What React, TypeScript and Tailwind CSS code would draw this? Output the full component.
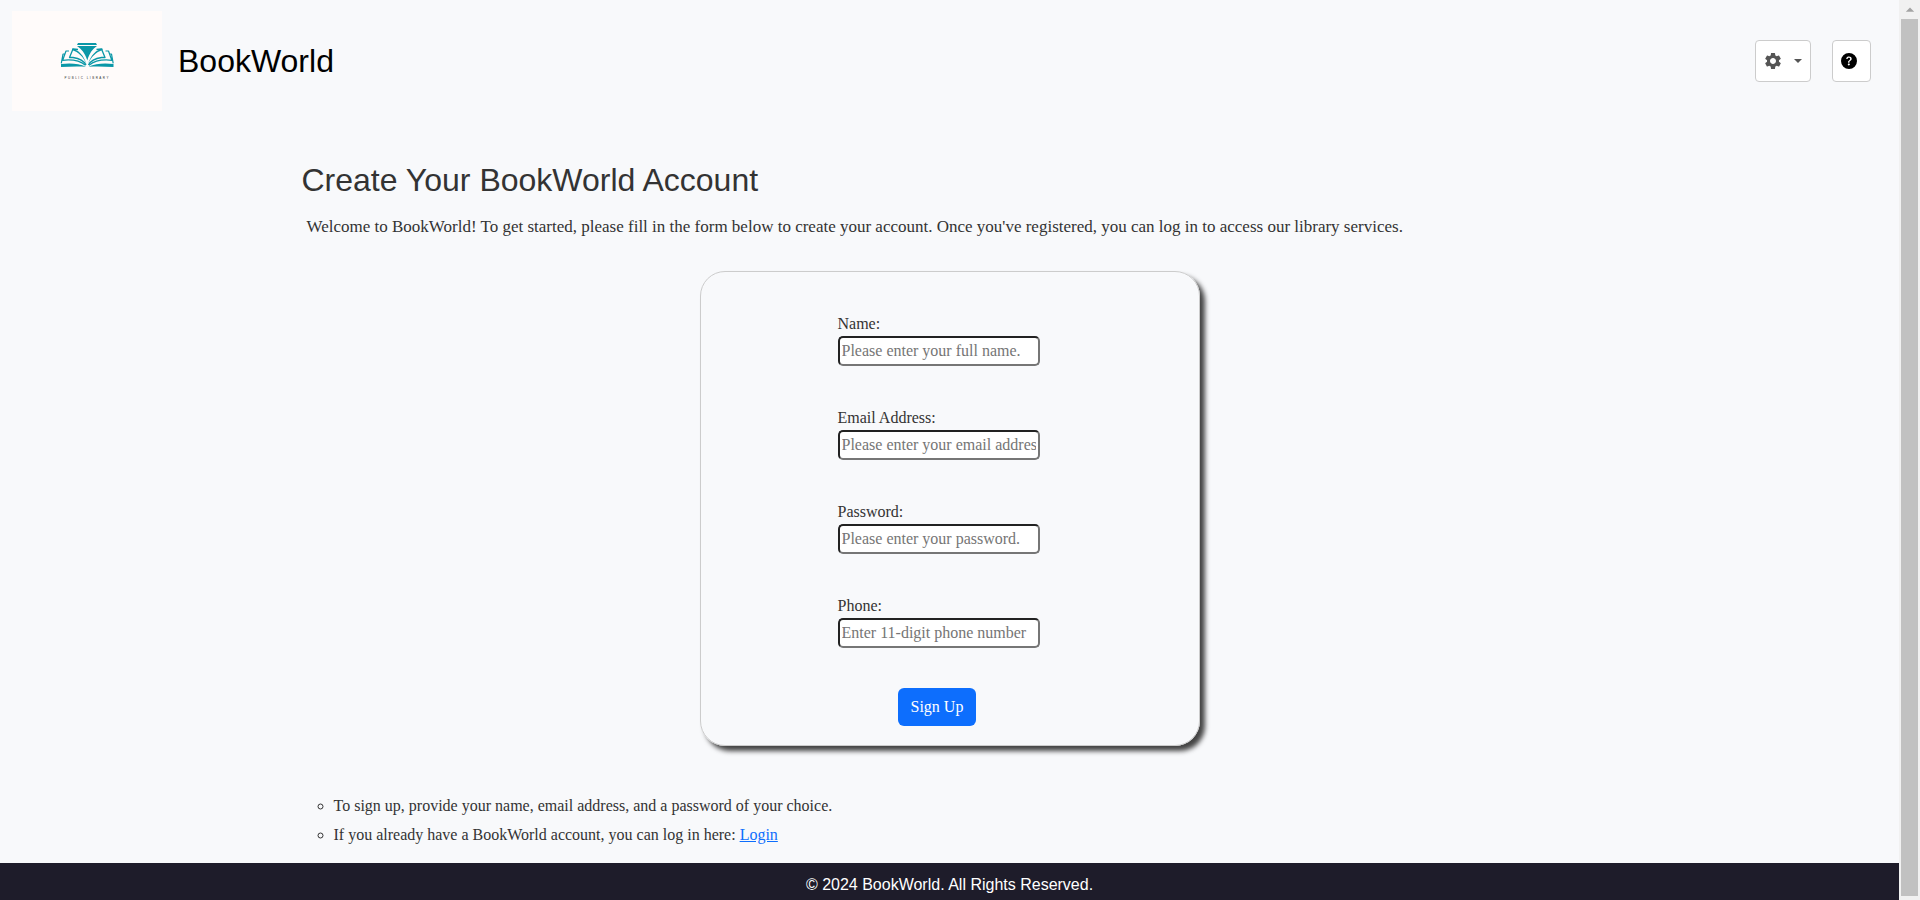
import { BsQuestionCircleFill } from "react-icons/bs";
import { MdSettings, MdArrowDropUp } from "react-icons/md";

const fields = [
  { id: "name", label: "Name:", type: "text", placeholder: "Please enter your full name." },
  { id: "email", label: "Email Address:", type: "email", placeholder: "Please enter your email address." },
  { id: "password", label: "Password:", type: "password", placeholder: "Please enter your password." },
  { id: "phone", label: "Phone:", type: "tel", placeholder: "Enter 11-digit phone number" },
];

function BookHalf() {
  return (
    <>
      <path
        d="M74 54c-2-4-6-6.500-13-7.500h-3.500l3.500-8.500 5 .5"
        fill="none"
        stroke="#0a97a7"
        strokeWidth="1.300"
        strokeLinejoin="round"
      />
      <path d="M60 37.500c6 1 12 7 14.500 15.500-3-7-8-12-14.500-14z" fill="#0a97a7" />
      <path
        d="M57 40h-3l-3.300 9.300c9-1 17 .2 22.800 5M53 43h-2l-1.700 9.300"
        fill="none"
        stroke="#0a97a7"
        strokeWidth="1.200"
        strokeLinejoin="round"
      />
      <path d="M49 53c9-1 18-.6 25 2.700-8-.5-16-.3-25 .3z" fill="#0a97a7" />
    </>
  );
}

function Logo() {
  return (
    <svg viewBox="0 0 150 100" className="h-[100px] w-[150px] bg-[#fffbfa]" role="img" aria-label="Public Library">
      <path d="M66 32h18l1 2H65z" fill="#0a97a7" />
      <path d="M65 35h20c-4.500 3-7.500 7-9.700 14.500C73 42 69.500 38 65 35z" fill="#0a97a7" />
      <BookHalf />
      <g transform="translate(150.500 0) scale(-1 1)">
        <BookHalf />
      </g>
      <text x="52.500" y="68" fontSize="3" letterSpacing="1.500" fill="#333" fontFamily="Liberation Sans, sans-serif">
        PUBLIC LIBRARY
      </text>
    </svg>
  );
}

function ScrollRail() {
  return (
    <div className="flex w-[21px] shrink-0 flex-col items-center bg-[#f1f1f1] pb-1" aria-hidden="true">
      <div className="flex h-[19px] items-center text-[#a3a3a3]">
        <MdArrowDropUp size={20} />
      </div>
      <div className="w-[17px] grow bg-[#c1c1c1]" />
    </div>
  );
}

export default function App() {
  return (
    <div className="flex min-h-screen bg-[#f8f9fb] font-['Liberation_Serif',serif] text-base text-[#333]">
      <div className="flex min-w-0 grow flex-col">
        <header className="flex items-center justify-between pt-[11px] pr-7 pb-[10px] pl-3">
          <div className="flex items-center gap-4">
            <Logo />
            <span className="font-['Liberation_Sans',sans-serif] text-[32px] text-black">BookWorld</span>
          </div>
          <div className="flex gap-[21px]">
            <button
              type="button"
              aria-label="Settings"
              className="flex h-[42px] w-14 items-center gap-[11px] rounded border border-[#ccc] bg-white pl-[7px] text-[#555]"
            >
              <MdSettings size={20} />
              <svg viewBox="0 0 8 4" className="h-1 w-2 fill-current">
                <path d="M0 0h8L4 4z" />
              </svg>
            </button>
            <button
              type="button"
              aria-label="Help"
              className="flex h-[42px] w-[39px] items-center rounded border border-[#ccc] bg-white pl-2 text-black"
            >
              <BsQuestionCircleFill size={16} />
            </button>
          </div>
        </header>

        <main className="mx-auto w-full max-w-[1320px] grow px-3 pt-10">
          <h1 className="font-['Liberation_Sans',sans-serif] text-[32px] leading-[38px]">
            Create Your BookWorld Account
          </h1>
          <p className="mt-[15px] px-[5px] text-[17px] leading-[26px]">
            Welcome to BookWorld! To get started, please fill in the form below to create your account. Once you've
            registered, you can log in to access our library services.
          </p>

          <form className="mx-auto mt-[31px] flex w-full max-w-[500px] flex-col items-center rounded-[25px] border border-[#ccc] pt-10 pr-[22px] pb-[19px] shadow-[5px_5px_5px_#444]">
            <div className="flex w-[202px] flex-col">
              {fields.map((field) => (
                <div key={field.id} className="mb-10 flex flex-col">
                  <label htmlFor={field.id} className="leading-6">
                    {field.label}
                  </label>
                  <input
                    id={field.id}
                    type={field.type}
                    placeholder={field.placeholder}
                    className="h-[30px] rounded-[5px] border-2 border-t-[#222] border-r-[#767676] border-b-[#767676] border-l-[#222] bg-white px-0.5 placeholder:text-[#757575]"
                  />
                </div>
              ))}
              <button type="submit" className="ml-[60px] h-[38px] self-start rounded-md bg-[#0d6efd] px-[13px] text-white">
                Sign Up
              </button>
            </div>
          </form>

          <ul className="mt-[45px] mb-3 list-[circle] pl-8">
            <li className="leading-[29px]">To sign up, provide your name, email address, and a password of your choice.</li>
            <li className="leading-[29px]">
              If you already have a BookWorld account, you can log in here:{" "}
              <a href="#login" className="text-[#0d6efd] underline">
                Login
              </a>
            </li>
          </ul>
        </main>

        <footer className="bg-[#1e1c2a] pt-[10px] pb-[3px] text-center font-['Liberation_Sans',sans-serif] leading-6 text-white">
          © 2024 BookWorld. All Rights Reserved.
        </footer>
      </div>
      <ScrollRail />
    </div>
  );
}
